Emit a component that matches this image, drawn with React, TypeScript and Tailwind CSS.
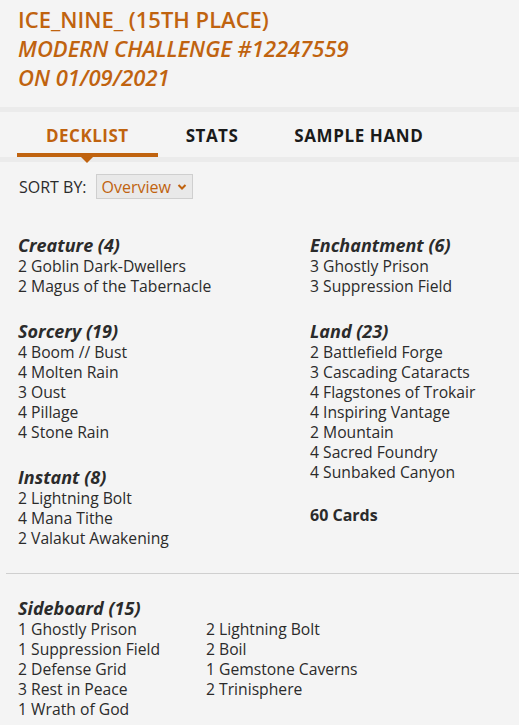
import React from "react";

const ORANGE = "text-[#c0630f]";

type Section = { title: string; cards: string[] };

const left: Section[] = [
  { title: "Creature (4)", cards: ["2 Goblin Dark-Dwellers", "2 Magus of the Tabernacle"] },
  { title: "Sorcery (19)", cards: ["4 Boom // Bust", "4 Molten Rain", "3 Oust", "4 Pillage", "4 Stone Rain"] },
  { title: "Instant (8)", cards: ["2 Lightning Bolt", "4 Mana Tithe", "2 Valakut Awakening"] },
];
const right: Section[] = [
  { title: "Enchantment (6)", cards: ["3 Ghostly Prison", "3 Suppression Field"] },
  {
    title: "Land (23)",
    cards: [
      "2 Battlefield Forge",
      "3 Cascading Cataracts",
      "4 Flagstones of Trokair",
      "4 Inspiring Vantage",
      "2 Mountain",
      "4 Sacred Foundry",
      "4 Sunbaked Canyon",
    ],
  },
];

function Sec({ s }: { s: Section }) {
  return (
    <div>
      <div className="text-[18px] leading-[22px] font-bold italic text-[#2b2b2b]">{s.title}</div>
      {s.cards.map((c) => (
        <div key={c} className="text-[15.7px] leading-[20px] text-[#2b2b2b]">
          {c}
        </div>
      ))}
    </div>
  );
}

export default function App() {
  return (
    <div
      className="w-[519px] h-[725px] overflow-hidden bg-[#f4f4f4]"
      style={{ fontFamily: '"Open Sans", "Noto Sans", sans-serif' }}
    >
      <div className={`px-[18px] pt-[5px] h-[107px] ${ORANGE} text-[22px] leading-[29px] font-semibold`}>
        <div>ICE_NINE_ (15TH PLACE)</div>
        <div className="italic">MODERN CHALLENGE #12247559</div>
        <div className="italic">ON 01/09/2021</div>
      </div>
      <div className="h-[5px] bg-[#ebebeb]" />
      <div className="flex pl-[17px] h-[45px]">
        <div className="relative px-[29px] pt-[11px] text-[17px] font-bold tracking-[0.5px] text-[#c0630f]">
          DECKLIST
          <div className="absolute left-0 right-0 bottom-0 h-[4px] bg-[#c0630f]" />
          <div className="absolute left-1/2 -translate-x-1/2 bottom-[-6px] w-0 h-0 border-l-[6px] border-r-[6px] border-t-[6px] border-l-transparent border-r-transparent border-t-[#c0630f]" />
        </div>
        <div className="px-[28px] pt-[11px] text-[17px] font-bold tracking-[0.5px] text-[#1a1a1a]">STATS</div>
        <div className="px-[28px] pt-[11px] text-[17px] font-bold tracking-[0.6px] text-[#1a1a1a]">SAMPLE HAND</div>
      </div>
      <div className="h-[5px] bg-[#ebebeb]" />
      <div className="flex items-center pl-[19px] pt-[12px] gap-[9px]">
        <span className="text-[16px] text-[#2b2b2b]">SORT BY:</span>
        <div className="flex items-center gap-[6px] h-[25px] px-[5px] border border-[#cfcfcf] bg-[#e9e9e9] text-[16px] text-[#c0630f]">
          Overview
          <svg width="10" height="8" viewBox="0 0 10 8">
            <path d="M1.5 2 L5 5.5 L8.5 2" fill="none" stroke="#c0630f" strokeWidth="2" />
          </svg>
        </div>
      </div>
      <div className="flex pl-[18px] pt-[35px]">
        <div className="w-[292px] flex flex-col gap-[24px]">
          {left.map((s) => (
            <Sec key={s.title} s={s} />
          ))}
        </div>
        <div className="flex flex-col gap-[24px]">
          {right.map((s) => (
            <Sec key={s.title} s={s} />
          ))}
          <div className="-mt-[2px] text-[16px] leading-[22px] font-bold text-[#2b2b2b]">60 Cards</div>
        </div>
      </div>
      <div className="ml-[6px] mt-[25px] h-px bg-[#cfcfcf]" />
      <div className="pl-[18px] pt-[23px]">
        <div className="text-[18px] leading-[22px] font-bold italic text-[#2b2b2b]">Sideboard (15)</div>
        <div className="flex">
          <div className="w-[188px]">
            {["1 Ghostly Prison", "1 Suppression Field", "2 Defense Grid", "3 Rest in Peace", "1 Wrath of God"].map((c) => (
              <div key={c} className="text-[15.7px] leading-[20px] text-[#2b2b2b]">
                {c}
              </div>
            ))}
          </div>
          <div>
            {["2 Lightning Bolt", "2 Boil", "1 Gemstone Caverns", "2 Trinisphere"].map((c) => (
              <div key={c} className="text-[15.7px] leading-[20px] text-[#2b2b2b]">
                {c}
              </div>
            ))}
          </div>
        </div>
      </div>
    </div>
  );
}
